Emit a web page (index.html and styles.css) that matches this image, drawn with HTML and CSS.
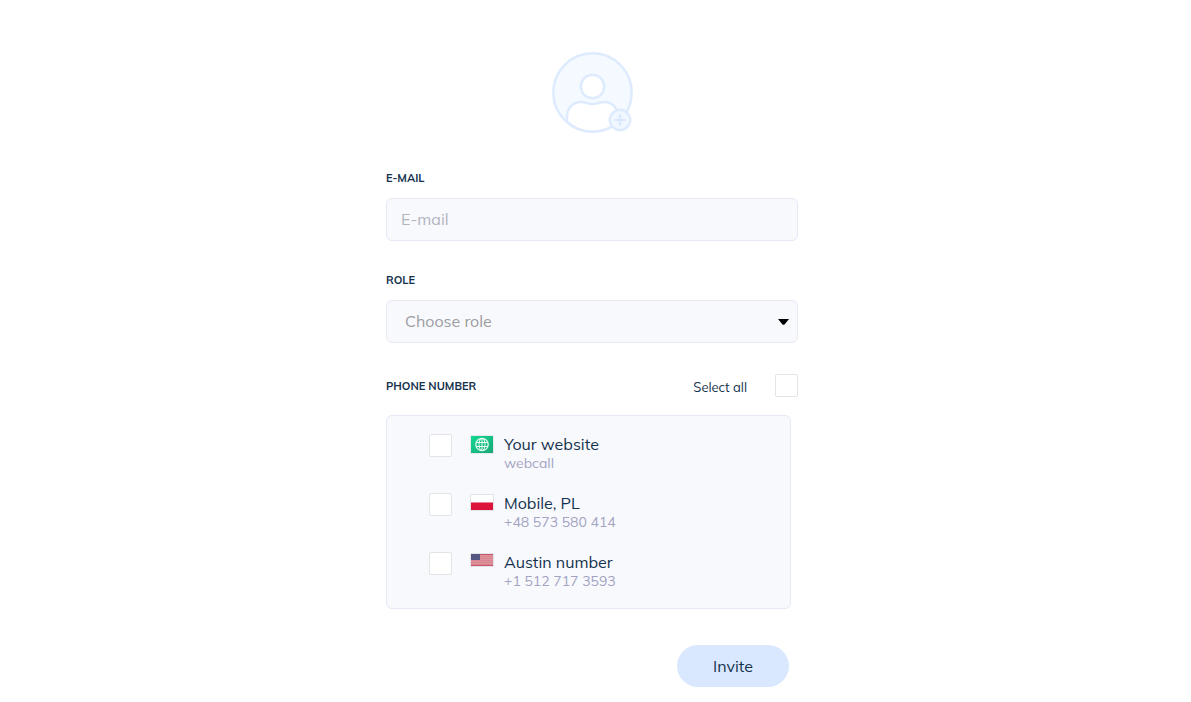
FILE: index.html
```html
<!DOCTYPE html>
<html lang="en">

<head>
    <meta charset="UTF-8">
    <meta name="viewport" content="width=device-width, initial-scale=1.0">
    <title>Invite</title>
    <link rel="stylesheet" href="styles.css">
</head>

<body>
    <form class="invite">
        <svg class="avatar" viewBox="0.5 0.5 81 81" aria-hidden="true">
            <circle cx="41" cy="41" r="39.2" fill="#f4faff" />
            <path d="M15.500 70V65C15.5 56 22 50.5 29 50.5C34 50.5 36 52.5 41 52.5C46 52.5 48 50.5 53 50.5C60 50.5 66.5 56 66.5 65V70C60 77 51 80.200 41 80.200C31 80.200 22 77 15.5 70Z" fill="#fff" stroke="#deebfe" stroke-width="2.5" />
            <circle cx="41" cy="41" r="39.2" fill="none" stroke="#deebfe" stroke-width="2.5" />
            <circle cx="41" cy="35" r="11.7" fill="#fff" stroke="#deebfe" stroke-width="2.5" />
            <circle cx="68.5" cy="68.5" r="10.2" fill="#f1f7ff" stroke="#deebfe" stroke-width="2.5" />
            <path d="M68.5 63v11M63 68.5h11" fill="none" stroke="#d8e7fe" stroke-width="2.2" />
        </svg>

        <div class="field">
            <label class="caption" for="email">E-MAIL</label>
            <input class="control" id="email" type="email" placeholder="E-mail">
        </div>

        <div class="field">
            <label class="caption" for="role">ROLE</label>
            <div class="select-wrap">
                <select class="control role" id="role">
                    <option>Choose role</option>
                </select>
                <svg class="arrow" viewBox="0 0 11 6" aria-hidden="true">
                    <path d="M0 0h11L6.5 5.5Q5.5 6 4.5 5.5Z" fill="#000" />
                </svg>
            </div>
        </div>

        <div class="phone-head">
            <span class="caption">PHONE NUMBER</span>
            <label class="select-all" for="all">Select all</label>
            <input class="check" id="all" type="checkbox">
        </div>

        <ul class="numbers">
            <li class="number">
                <input class="check" id="web" type="checkbox">
                <svg class="flag" width="24" height="19" viewBox="0 0 24 19" aria-hidden="true">
                    <defs>
                        <linearGradient id="green" x1="0" y1="0" x2="1" y2="1">
                            <stop offset="0" stop-color="#12d990" />
                            <stop offset="1" stop-color="#1ba677" />
                        </linearGradient>
                    </defs>
                    <rect width="24" height="19" rx="1" fill="#e6e8ea" />
                    <rect x="1" y="1" width="22" height="17" fill="url(#green)" />
                    <g fill="none" stroke="#e9fbf4">
                        <circle cx="12" cy="9.5" r="6.2" stroke-width="1.3" />
                        <ellipse cx="12" cy="9.5" rx="3" ry="6.2" />
                        <path d="M12 3.5v12M6.5 7.5h11M6.5 11.5h11" />
                    </g>
                </svg>
                <label class="info" for="web">
                    <span class="name">Your website</span>
                    <span class="detail">webcall</span>
                </label>
            </li>
            <li class="number">
                <input class="check" id="mobile" type="checkbox">
                <svg class="flag" width="24" height="17" viewBox="0 0 24 17" aria-hidden="true">
                    <rect width="24" height="17" rx="1" fill="#e2e4e8" />
                    <rect x="1" y="1" width="22" height="8" fill="#fff" />
                    <rect x="1" y="8" width="22" height="8" fill="#dc143c" />
                    <rect x="1" y="8" width="22" height="1" fill="#eb8298" />
                </svg>
                <label class="info" for="mobile">
                    <span class="name">Mobile, PL</span>
                    <span class="detail">+48 573 580 414</span>
                </label>
            </li>
            <li class="number">
                <input class="check" id="austin" type="checkbox">
                <svg class="flag" width="24" height="14" viewBox="0 0 24 14" aria-hidden="true">
                    <rect width="24" height="14" rx="1" fill="#e2e4e8" />
                    <rect x="1" y="1" width="22" height="12" fill="#dd929d" />
                    <path d="M1 3.5h22M1 5.5h22M1 7.5h22M1 9.5h22M1 11.5h22" stroke="#d88591" />
                    <path d="M1 1.5h22M1 12.5h22" stroke="#c9566a" />
                    <rect x="1" y="1" width="9" height="6" fill="#565682" />
                </svg>
                <label class="info" for="austin">
                    <span class="name">Austin number</span>
                    <span class="detail">+1 512 717 3593</span>
                </label>
            </li>
        </ul>

        <button class="submit" type="submit">Invite</button>
    </form>
</body>

</html>
```
FILE: styles.css
```css
* {
    box-sizing: border-box;
}

body {
    margin: 0;
    padding: 52px 7px 15px 0;
    background: #fff;
    color: #14324d;
    font-family: Mulish, Muli, Lato, sans-serif;
    font-size: 16px;
}

.invite {
    display: flex;
    flex-direction: column;
    max-width: 412px;
    margin: 0 auto;
}

.avatar {
    width: 81px;
    height: 81px;
    margin-bottom: 37px;
    align-self: center;
}

.field {
    display: flex;
    flex-direction: column;
    gap: 12px;
    margin-bottom: 31px;
}

.caption {
    font-size: 11px;
    line-height: 16px;
    font-weight: 700;
}

.control {
    display: block;
    width: 100%;
    height: 43px;
    padding: 0 14px 2px;
    border: 1px solid #e7e8f4;
    border-radius: 6px;
    background: #f8f9fd;
    color: #14324d;
    font-family: inherit;
    font-size: 16px;
    outline: none;
}

.control::placeholder {
    color: #b2b4bf;
    opacity: 1;
}

.select-wrap {
    position: relative;
}

.role {
    padding-left: 18px;
    color: #9c9da1;
    appearance: none;
}

.arrow {
    position: absolute;
    top: 19px;
    right: 9px;
    width: 11px;
    height: 6px;
    pointer-events: none;
}

.phone-head {
    display: flex;
    align-items: center;
    margin-bottom: 18px;
}

.select-all {
    margin: 2px 28px 0 auto;
    font-size: 13px;
}

.check {
    flex: none;
    width: 23px;
    height: 23px;
    margin: 0;
    border: 1px solid #e3e4e7;
    border-radius: 2px;
    background: #fff;
    appearance: none;
}

.check:checked {
    background: #d9e8ff;
}

.numbers {
    display: flex;
    flex-direction: column;
    gap: 21px;
    margin: 0 7px 36px 0;
    padding: 18px 42px;
    border: 1px solid #e7e8f4;
    border-radius: 6px;
    background: #f8f9fd;
    list-style: none;
}

.number {
    display: flex;
    align-items: flex-start;
}

.flag {
    flex: none;
    margin: 1px 10px 0 18px;
}

.info {
    display: flex;
    flex-direction: column;
}

.name {
    font-size: 16px;
    line-height: 20px;
}

.detail {
    color: #a3a3c2;
    font-size: 14px;
    line-height: 18px;
}

.submit {
    align-self: flex-end;
    width: 112px;
    height: 42px;
    margin-right: 9px;
    border: none;
    border-radius: 21px;
    background: #d9e8ff;
    color: #14324d;
    font-family: inherit;
    font-size: 16px;
    cursor: pointer;
}
```
